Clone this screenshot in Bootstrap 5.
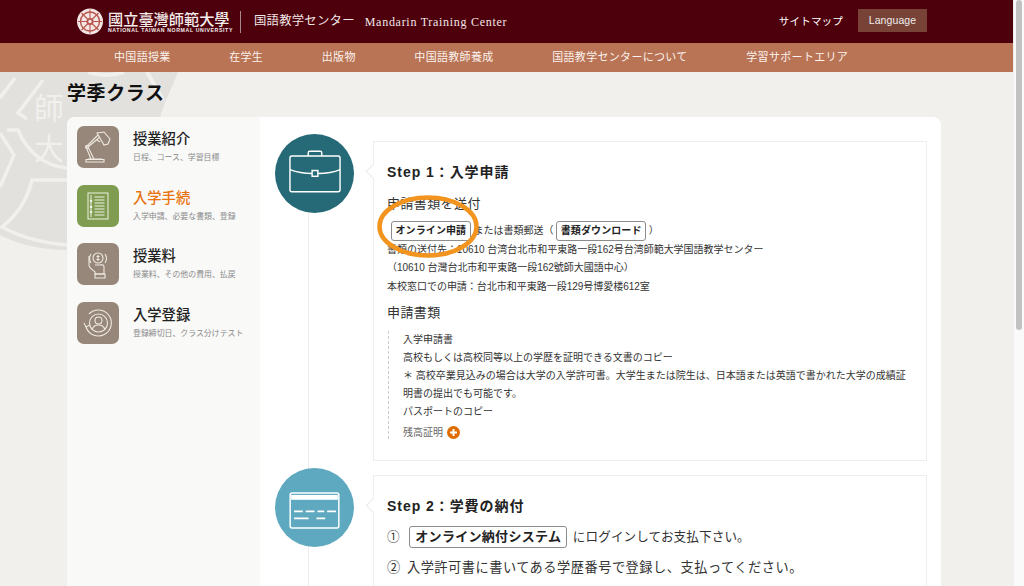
<!DOCTYPE html>
<html lang="ja">
<head>
<meta charset="utf-8">
<title>学季クラス</title>
<link href="https://cdn.jsdelivr.net/npm/bootstrap@5.3.0/dist/css/bootstrap.min.css" rel="stylesheet">
<style>
html,body{height:586px;overflow:hidden;margin:0}
body{font-family:"Liberation Sans","Noto Sans CJK JP",sans-serif;background:#f1f0ed;color:#333}
.shell{height:586px;overflow:hidden}
.mainpane{width:1013px;flex:none;position:relative;height:586px;overflow:hidden}
.sbar{width:11px;background:#fafafa;border-left:1px solid #eee;padding:0 2px 0 2px}
.sthumb{height:330px;background:#c2c2c2;border-radius:3px}
.topbar{height:43px;background:#4d000c;padding-left:77px;padding-right:86px;color:#fff}
.crestname{width:122px;margin-left:5px;color:#f4ecea}
.cn-big{font-family:"Noto Sans CJK TC",serif;font-size:15.2px;line-height:18px;font-weight:500;white-space:nowrap}
.cn-small{font-size:5.2px;line-height:7px;font-weight:700;letter-spacing:.62px;white-space:nowrap}
.vbar{width:1px;height:22px;background:#a98a8e;margin:0 13px 0 10px}
.sitejp{font-size:12.4px;letter-spacing:.2px;white-space:nowrap;color:#f1e6e6}
.siteen{font-family:"Liberation Serif",serif;font-size:12px;letter-spacing:.72px;margin-left:10px;white-space:nowrap;color:#f1e6e6}
.sitemap{font-size:10.6px;margin-right:15px;color:#fff;letter-spacing:.1px}
.langbtn{width:69px;height:23px;background:#784237;font-size:10.5px;color:#eee;letter-spacing:.1px;margin-top:-2px}
.mainnav{height:29px;background:#b97455;padding-left:114px;gap:58.6px;color:#fbf2ee;font-size:11px;letter-spacing:.32px;white-space:nowrap}
.seal{position:absolute;left:0;top:72px;width:200px;height:190px}
.pagetitle{height:45px;padding:10px 0 0 67px;margin:0;font-size:19px;line-height:24px;font-weight:700;color:#111;letter-spacing:.6px;position:relative}
.panel{margin-left:67px;width:874px;height:600px;background:#fff;border-radius:8px 8px 0 0;position:relative;overflow:hidden}
.sidecol{width:193px;flex:none;background:#f9f9f8;padding-top:9px;padding-left:10px}
.sideitem{height:58.7px;gap:14px}
.sicon{width:42px;height:42px;border-radius:7px;background:#96877a;flex:none}
.sicon.on{background:#809c50}
.stitle{font-size:14.3px;line-height:18px;color:#222;font-weight:500;white-space:nowrap;margin-top:4px}
.stitle.on{color:#e8730e}
.ssub{font-size:7.9px;line-height:12px;color:#8a8a8a;white-space:nowrap;margin-top:4px}
.flowcol{position:relative;padding:17px 0 0 15px;flex:1}
.vline{position:absolute;left:48px;top:60px;bottom:0;width:1px;background:#ececec}
.stepline{position:relative;gap:19px;margin-bottom:7px}
.disc{width:79px;height:79px;border-radius:50%;flex:none;position:relative}
.disc1{background:#266a78}
.disc2{background:#5ea9bf}
.glyph1{margin-bottom:5px}
.glyph2{margin-top:6px}
.stepbox{width:554px;border:1px solid #eee;background:#fff;position:relative;padding:0 13px;margin-top:7px}
.box1{height:320px}
.box2{height:200px}
.stepbox::before{content:"";position:absolute;left:-6px;top:24px;width:11px;height:11px;background:#fff;border-left:1px solid #eaeaea;border-bottom:1px solid #eaeaea;transform:rotate(45deg)}
.steph{font-size:14px;font-weight:700;letter-spacing:.95px;line-height:20px;margin:20px 0 0;color:#222}
.subh{font-size:13px;line-height:18px;letter-spacing:.4px;margin:13px 0 0;font-weight:400;color:#333}
.subh2{margin-top:8px}
.btnrow{font-size:10px;line-height:20px;margin-top:8px;white-space:nowrap;color:#333}
.tagbtn{display:inline-block;border:1px solid #8c8c8c;border-radius:3px;font-weight:700;color:#222;background:#fff;padding:0 3.5px;font-size:10px;line-height:18px;letter-spacing:.1px}
.addr{font-size:10px;line-height:18.3px;white-space:nowrap;color:#333;letter-spacing:-.02px}
.doclist{border-left:1px dashed #ccc;margin:9px 0 0 1px;padding:0 0 0 14px;font-size:10px;line-height:18px;color:#333;height:108px}
.docmore{color:#666;line-height:23px;display:flex;align-items:center;gap:4px}
.plus{width:13px;height:13px;flex:none}
.paybtn{display:inline-block;border:1px solid #8c8c8c;border-radius:3px;font-weight:700;color:#222;padding:0 5px;font-size:13px;line-height:20px;letter-spacing:.3px;margin:0 2px 0 6px}
.payline{font-size:12.6px;line-height:22px;white-space:nowrap;letter-spacing:.1px;color:#333;margin-top:10px}
.payline2{font-size:13.2px;letter-spacing:.53px;word-spacing:2px;margin-top:9px}
.ring{position:absolute;left:377px;top:195px;width:102px;height:63px;pointer-events:none}
</style>
</head>
<body>
<div class="shell d-flex">
<div class="mainpane">
  <header class="topbar d-flex align-items-center">
    <svg width="26" height="27" viewBox="0 0 26 27" aria-hidden="true"><circle cx="13" cy="13.500" r="13" fill="#f3e6e4"/><circle cx="13" cy="13.500" r="9.500" fill="none" stroke="#b8554c" stroke-width="1.400"/><g stroke="#b8554c" stroke-width="1.100"><path d="M13 1.500v24M1 13.500h24M4.500 5l17 17M21.500 5l-17 17"/></g><circle cx="13" cy="13.500" r="3.600" fill="#b8554c"/><circle cx="13" cy="13.500" r="1.700" fill="#f3e6e4"/></svg>
    <div class="crestname"><div class="cn-big">國立臺灣師範大學</div><div class="cn-small">NATIONAL TAIWAN NORMAL UNIVERSITY</div></div>
    <div class="vbar"></div>
    <span class="sitejp">国語教学センター</span><span class="siteen">Mandarin Training Center</span>
    <div class="ms-auto d-flex align-items-center">
      <span class="sitemap">サイトマップ</span>
      <span class="langbtn d-flex align-items-center justify-content-center">Language</span>
    </div>
  </header>
  <nav class="mainnav d-flex align-items-center">
    <span>中国語授業</span><span>在学生</span><span>出版物</span><span>中国語教師養成</span><span>国語教学センターについて</span><span>学習サポートエリア</span>
  </nav>
  <svg class="seal" viewBox="0 72 200 190" aria-hidden="true">
    <path d="M0 72H178c-6 16-14 30-18 46v60H67v72c-25 0-50-6-67-15z" fill="#e2e1de"/>
    <g fill="none" stroke="#f1f0ed" stroke-width="3.500">
      <path d="M43 80L18 113l9 6M15 78L0 98M7 130h11c8 20 25 36 49 38M0 133l14 22-14 32"/>
      <path d="M67 180H32c-4 18-14 34-30 47 18 10 42 16 65 18"/>
      <path d="M88 72c12 4 24 4 36 0M147 72l16 28" stroke-width="4"/>
    </g>
    <text x="34" y="119" font-size="30" fill="#f1f0ed" font-family="Noto Sans CJK TC">師</text>
    <text x="34" y="159" font-size="30" fill="#f1f0ed" font-family="Noto Sans CJK TC">大</text>
  </svg>
  <h1 class="pagetitle">学季クラス</h1>
  <div class="panel d-flex">
    <aside class="sidecol">
      <div class="sideitem d-flex">
        <div class="sicon d-flex align-items-center justify-content-center"><svg width="30" height="34" viewBox="0 0 30 34" fill="none" stroke="#efe9e0" stroke-width="1.100"><path d="M5 29h14M3 32h18v-2.500H3z"/><path d="M11 29L5 17 17 7M8 29L3 17 15 5"/><circle cx="4" cy="17" r="1.500"/><path d="M14 3l7-1 6 7-2 5-4 1z"/><path d="M17 12l-3-2"/></svg></div>
        <div><div class="stitle">授業紹介</div><div class="ssub">日程、コース、学習目標</div></div>
      </div>
      <div class="sideitem d-flex">
        <div class="sicon on d-flex align-items-center justify-content-center"><svg width="22" height="28" viewBox="0 0 22 28" fill="none" stroke="#eef2e2" stroke-width="1"><rect x="1" y="1" width="20" height="26"/><path d="M4 3v22M7.500 5h10M7.500 8h10M7.500 11h10M7.500 14h10M7.500 17h10M7.500 20h10M7.500 23h10"/><path d="M4 9h.1M4 15h.1M4 20h.1" stroke-width="2.500" stroke-linecap="round"/></svg></div>
        <div><div class="stitle on">入学手続</div><div class="ssub">入学申請、必要な書類、登録</div></div>
      </div>
      <div class="sideitem d-flex">
        <div class="sicon d-flex align-items-center justify-content-center"><svg width="24" height="30" viewBox="0 0 24 30" fill="none" stroke="#efe9e0" stroke-width="1.100"><circle cx="12" cy="9" r="5"/><path d="M5 5c-2 3-2 6 0 9M19 5c2 3 2 6 0 9"/><path d="M12 6v6M10.500 7.500h3M10.500 10.500h3"/><path d="M3 7v9c0 3 4 5 6 7v2h9v-7c0-3-2-2-4-2H9"/><path d="M9 25h10v4H9z"/></svg></div>
        <div><div class="stitle">授業料</div><div class="ssub">授業料、その他の費用、払戻</div></div>
      </div>
      <div class="sideitem d-flex">
        <div class="sicon d-flex align-items-center justify-content-center"><svg width="30" height="30" viewBox="0 0 30 30" fill="none" stroke="#efe9e0" stroke-width="1.100"><path d="M6 6a13 13 0 1 1-3 13"/><path d="M3 19l-2-4M3 19l4-2"/><circle cx="15.500" cy="15" r="9"/><circle cx="15.500" cy="12.500" r="3.500"/><path d="M9 22c1-4 3-5 6.500-5s5.500 1 6.500 5"/></svg></div>
        <div><div class="stitle">入学登録</div><div class="ssub">登録締切日、クラス分けテスト</div></div>
      </div>
    </aside>
    <section class="flowcol">
      <div class="vline"></div>
      <div class="stepline d-flex">
        <div class="disc disc1 d-flex align-items-center justify-content-center"><svg class="glyph1" width="52" height="43" viewBox="0 0 54 44" fill="none" stroke="#fff" stroke-width="1.500"><rect x="1" y="6" width="52" height="37" rx="2"/><path d="M1 20c8 3 16 4 23 4M30 24c8 0 16-1 23-4"/><rect x="24" y="21" width="6" height="6" fill="#266a78"/><path d="M20 6V2.500a1.500 1.500 0 0 1 1.500-1.500h11A1.500 1.500 0 0 1 34 2.500V6"/></svg></div>
        <article class="stepbox box1">
          <h2 class="steph">Step 1：入学申請</h2>
          <h3 class="subh">申請書類を送付</h3>
          <div class="btnrow"><span class="tagbtn ms-1">オンライン申請</span> または書類郵送（ <span class="tagbtn">書類ダウンロード</span> ）</div>
          <div class="addr">書類の送付先：10610 台湾台北市和平東路一段162号台湾師範大学国語教学センター<br>（10610 台灣台北市和平東路一段162號師大國語中心）<br>本校窓口での申請：台北市和平東路一段129号博愛楼612室</div>
          <h3 class="subh subh2">申請書類</h3>
          <div class="doclist">入学申請書<br>高校もしくは高校同等以上の学歴を証明できる文書のコピー<br>＊ 高校卒業見込みの場合は大学の入学許可書。大学生または院生は、日本語または英語で書かれた大学の成績証<br>明書の提出でも可能です。<br>パスポートのコピー
            <div class="docmore">残高証明 <svg class="plus" viewBox="0 0 13 13" aria-hidden="true"><circle cx="6.500" cy="6.500" r="6.500" fill="#e06c00"/><path d="M6.500 3v7M3 6.500h7" stroke="#fff" stroke-width="2"/></svg></div>
          </div>
        </article>
      </div>
      <div class="stepline d-flex">
        <div class="disc disc2 d-flex align-items-center justify-content-center"><svg class="glyph2" width="51" height="37" viewBox="0 0 52 38" fill="none" stroke="#fff" stroke-width="1.500"><rect x="1" y="1" width="50" height="36" rx="2"/><rect x="2" y="3" width="48" height="5" fill="#fff" stroke="none"/><path d="M5 20h9M17 20h9M29 20h7M39 20h9M5 27h15M28 27h9" stroke-width="1.800"/></svg></div>
        <article class="stepbox box2">
          <h2 class="steph">Step 2：学費の納付</h2>
          <div class="payline">① <span class="paybtn">オンライン納付システム</span> にログインしてお支払下さい。</div>
          <div class="payline payline2">② 入学許可書に書いてある学歴番号で登録し、支払ってください。</div>
        </article>
      </div>
    </section>
  </div>
  <svg class="ring" viewBox="0 0 102 63" aria-hidden="true"><ellipse cx="51" cy="31.500" rx="48.500" ry="29" fill="none" stroke="#f2941e" stroke-width="4.500"/></svg>
</div>
<div class="sbar flex-fill"><div class="sthumb"></div></div>
</div>
</body>
</html>
